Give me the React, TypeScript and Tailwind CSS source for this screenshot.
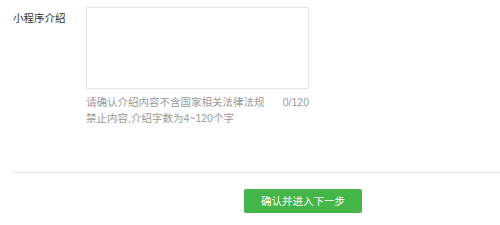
import React from 'react'

export default function App() {
  return (
    <div
      className="w-[500px] h-[225px] bg-white overflow-hidden"
      style={{ fontFamily: '"Liberation Sans", "Noto Sans CJK SC", sans-serif' }}
    >
      {/* 表单项 */}
      <div className="flex pl-[13px] pt-[7px]">
        <label className="w-[73px] pt-[3px] text-[10.5px] leading-[16px] text-[#353535]">
          小程序介绍
        </label>
        <div className="w-[223px]">
          <textarea className="block w-full h-[82px] border border-[#e4e4e4] rounded-[1px] resize-none outline-none" />
          <div className="flex justify-between mt-[5px] text-[10.5px] leading-[16px] text-[#9a9a9a]">
            <span className="w-[182px]">请确认介绍内容不含国家相关法律法规禁止内容,介绍字数为4~120个字</span>
            <span>0/120</span>
          </div>
        </div>
      </div>

      {/* 分割线 */}
      <div className="ml-[13px] mt-[46px] border-t border-[#e7e7e7]" />

      {/* 提交按钮 */}
      <div className="pl-[244px] pt-[15px]">
        <button className="w-[118px] h-[24px] rounded-[2px] bg-[#44b549] text-white text-[10.5px] leading-[24px]">
          确认并进入下一步
        </button>
      </div>
    </div>
  )
}
